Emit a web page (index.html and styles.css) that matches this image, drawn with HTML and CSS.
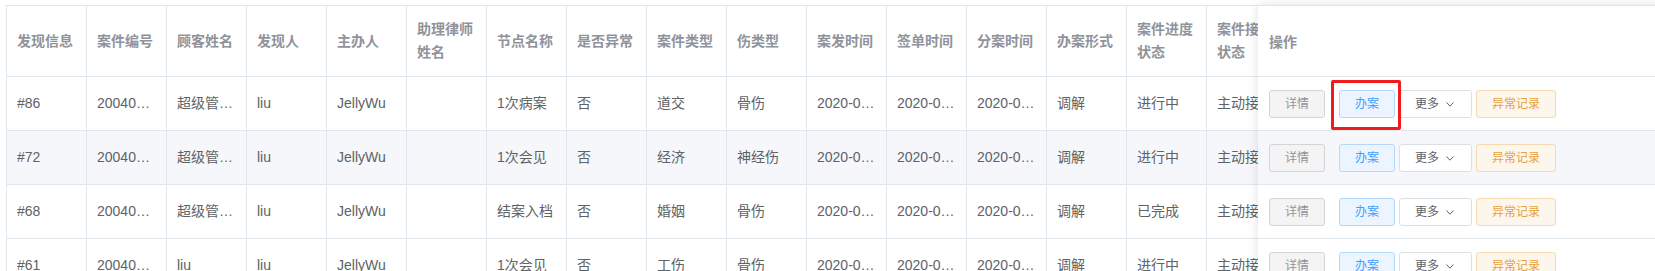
FILE: index.html
```html
<!DOCTYPE html>
<html lang="zh-CN">
<head>
<meta charset="utf-8">
<title>案件列表</title>
<link rel="stylesheet" href="styles.css">
</head>
<body>
<div class="table-wrap">
  <div class="grid">
    <div class="th"><span class="txt">发现信息</span></div>
    <div class="th"><span class="txt">案件编号</span></div>
    <div class="th"><span class="txt">顾客姓名</span></div>
    <div class="th"><span class="txt">发现人</span></div>
    <div class="th"><span class="txt">主办人</span></div>
    <div class="th"><span class="txt">助理律师姓名</span></div>
    <div class="th"><span class="txt">节点名称</span></div>
    <div class="th"><span class="txt">是否异常</span></div>
    <div class="th"><span class="txt">案件类型</span></div>
    <div class="th"><span class="txt">伤类型</span></div>
    <div class="th"><span class="txt">案发时间</span></div>
    <div class="th"><span class="txt">签单时间</span></div>
    <div class="th"><span class="txt">分案时间</span></div>
    <div class="th"><span class="txt">办案形式</span></div>
    <div class="th"><span class="txt">案件进度状态</span></div>
    <div class="th"><span class="txt">案件接收状态</span></div>
    <div class="th"><span class="txt">操作</span></div>

    <div class="row">
      <div class="td"><span class="txt">#86</span></div>
      <div class="td"><span class="txt">2004010086</span></div>
      <div class="td"><span class="txt">超级管理员</span></div>
      <div class="td"><span class="txt">liu</span></div>
      <div class="td"><span class="txt">JellyWu</span></div>
      <div class="td"><span class="txt"></span></div>
      <div class="td"><span class="txt">1次病案</span></div>
      <div class="td"><span class="txt">否</span></div>
      <div class="td"><span class="txt">道交</span></div>
      <div class="td"><span class="txt">骨伤</span></div>
      <div class="td"><span class="txt">2020-04-01</span></div>
      <div class="td"><span class="txt">2020-04-02</span></div>
      <div class="td"><span class="txt">2020-04-03</span></div>
      <div class="td"><span class="txt">调解</span></div>
      <div class="td"><span class="txt">进行中</span></div>
      <div class="td"><span class="txt">主动接单</span></div>
      <div class="td"></div>
    </div>
    <div class="row hover">
      <div class="td"><span class="txt">#72</span></div>
      <div class="td"><span class="txt">2004010072</span></div>
      <div class="td"><span class="txt">超级管理员</span></div>
      <div class="td"><span class="txt">liu</span></div>
      <div class="td"><span class="txt">JellyWu</span></div>
      <div class="td"><span class="txt"></span></div>
      <div class="td"><span class="txt">1次会见</span></div>
      <div class="td"><span class="txt">否</span></div>
      <div class="td"><span class="txt">经济</span></div>
      <div class="td"><span class="txt">神经伤</span></div>
      <div class="td"><span class="txt">2020-04-01</span></div>
      <div class="td"><span class="txt">2020-04-02</span></div>
      <div class="td"><span class="txt">2020-04-03</span></div>
      <div class="td"><span class="txt">调解</span></div>
      <div class="td"><span class="txt">进行中</span></div>
      <div class="td"><span class="txt">主动接单</span></div>
      <div class="td"></div>
    </div>
    <div class="row">
      <div class="td"><span class="txt">#68</span></div>
      <div class="td"><span class="txt">2004010068</span></div>
      <div class="td"><span class="txt">超级管理员</span></div>
      <div class="td"><span class="txt">liu</span></div>
      <div class="td"><span class="txt">JellyWu</span></div>
      <div class="td"><span class="txt"></span></div>
      <div class="td"><span class="txt">结案入档</span></div>
      <div class="td"><span class="txt">否</span></div>
      <div class="td"><span class="txt">婚姻</span></div>
      <div class="td"><span class="txt">骨伤</span></div>
      <div class="td"><span class="txt">2020-04-01</span></div>
      <div class="td"><span class="txt">2020-04-02</span></div>
      <div class="td"><span class="txt">2020-04-03</span></div>
      <div class="td"><span class="txt">调解</span></div>
      <div class="td"><span class="txt">已完成</span></div>
      <div class="td"><span class="txt">主动接单</span></div>
      <div class="td"></div>
    </div>
    <div class="row">
      <div class="td"><span class="txt">#61</span></div>
      <div class="td"><span class="txt">2004010061</span></div>
      <div class="td"><span class="txt">liu</span></div>
      <div class="td"><span class="txt">liu</span></div>
      <div class="td"><span class="txt">JellyWu</span></div>
      <div class="td"><span class="txt"></span></div>
      <div class="td"><span class="txt">1次会见</span></div>
      <div class="td"><span class="txt">否</span></div>
      <div class="td"><span class="txt">工伤</span></div>
      <div class="td"><span class="txt">骨伤</span></div>
      <div class="td"><span class="txt">2020-04-01</span></div>
      <div class="td"><span class="txt">2020-04-02</span></div>
      <div class="td"><span class="txt">2020-04-03</span></div>
      <div class="td"><span class="txt">调解</span></div>
      <div class="td"><span class="txt">进行中</span></div>
      <div class="td"><span class="txt">主动接单</span></div>
      <div class="td"></div>
    </div>
  </div>

  <div class="fixed-right">
    <div class="fth"><span class="txt">操作</span></div>
    <div class="ftd">
      <button class="btn btn-info">详情</button>
      <span class="mark-wrap"><button class="btn btn-primary">办案</button><span class="mark"></span></span>
      <button class="btn btn-default">更多<svg class="chev" width="8" height="5" viewBox="0 0 8 5"><polyline points="0.5,0.5 4,4.2 7.5,0.5" fill="none" stroke="#606266" stroke-width="1"/></svg></button>
      <button class="btn btn-warning">异常记录</button>
    </div>
    <div class="ftd hover">
      <button class="btn btn-info">详情</button>
      <span class="mark-wrap"><button class="btn btn-primary">办案</button></span>
      <button class="btn btn-default">更多<svg class="chev" width="8" height="5" viewBox="0 0 8 5"><polyline points="0.5,0.5 4,4.2 7.5,0.5" fill="none" stroke="#606266" stroke-width="1"/></svg></button>
      <button class="btn btn-warning">异常记录</button>
    </div>
    <div class="ftd">
      <button class="btn btn-info">详情</button>
      <span class="mark-wrap"><button class="btn btn-primary">办案</button></span>
      <button class="btn btn-default">更多<svg class="chev" width="8" height="5" viewBox="0 0 8 5"><polyline points="0.5,0.5 4,4.2 7.5,0.5" fill="none" stroke="#606266" stroke-width="1"/></svg></button>
      <button class="btn btn-warning">异常记录</button>
    </div>
    <div class="ftd">
      <button class="btn btn-info">详情</button>
      <span class="mark-wrap"><button class="btn btn-primary">办案</button></span>
      <button class="btn btn-default">更多<svg class="chev" width="8" height="5" viewBox="0 0 8 5"><polyline points="0.5,0.5 4,4.2 7.5,0.5" fill="none" stroke="#606266" stroke-width="1"/></svg></button>
      <button class="btn btn-warning">异常记录</button>
    </div>
  </div>
</div>
</body>
</html>
```

FILE: styles.css
```css
* { box-sizing: border-box; }
html, body {
  margin: 0;
  padding: 0;
  background: #fff;
  overflow: hidden;
}
body {
  font-family: "Liberation Sans", "Noto Sans CJK SC", sans-serif;
  font-size: 14px;
  color: #606266;
}
.table-wrap {
  position: relative;
  margin: 5px 0 0 6px;
  width: 1800px;
}
.grid {
  display: grid;
  grid-template-columns: repeat(17, 80px);
  grid-template-rows: 71px repeat(4, 54px);
  border-top: 1px solid #dfe6ec;
  border-left: 1px solid #dfe6ec;
  width: max-content;
}
.row { display: contents; }
.th, .td {
  border-right: 1px solid #dfe6ec;
  border-bottom: 1px solid #dfe6ec;
  padding: 0 10px;
  display: flex;
  align-items: center;
  overflow: hidden;
  min-width: 0;
  background: #fff;
}
.th {
  color: #909399;
  font-weight: bold;
  line-height: 23px;
}
.th .txt {
  width: 100%;
  word-break: break-all;
}
.td {
  line-height: 23px;
}
.td .txt {
  display: block;
  width: 100%;
  white-space: nowrap;
  overflow: hidden;
  text-overflow: ellipsis;
}
.row.hover .td { background: #f5f7fa; }

.fixed-right {
  position: absolute;
  top: 0;
  left: 1252px;
  width: 500px;
  background: #fff;
  border-top: 1px solid #dfe6ec;
  box-shadow: 0 0 10px rgba(0, 0, 0, 0.12);
}
.fth, .ftd {
  border-bottom: 1px solid #dfe6ec;
  padding: 0 11px;
  display: flex;
  align-items: center;
  background: #fff;
}
.fth {
  height: 71px;
  color: #909399;
  font-weight: bold;
}
.ftd { height: 54px; }
.ftd.hover { background: #f5f7fa; }

.btn {
  font-family: "Liberation Sans", "Noto Sans CJK SC", sans-serif;
  font-size: 12px;
  line-height: 12px;
  height: 28px;
  padding: 7px 15px;
  border-radius: 3px;
  border: 1px solid #dcdfe6;
  background: #fff;
  color: #606266;
  display: inline-flex;
  align-items: center;
  margin: 0;
  cursor: pointer;
}
.btn-info {
  background: #f4f4f5;
  border-color: #d3d4d6;
  color: #909399;
}
.btn-primary {
  background: #ecf5ff;
  border-color: #b3d8ff;
  color: #409eff;
}
.btn-default {
  margin-left: 4px;
}
.btn-warning {
  margin-left: 4px;
  background: #fdf6ec;
  border-color: #f5dab1;
  color: #e6a23c;
}
.chev {
  margin-left: 7px;
  margin-right: 2px;
  margin-top: 1px;
}
.mark-wrap {
  position: relative;
  display: inline-flex;
  margin-left: 14px;
}
.mark {
  position: absolute;
  top: -10px;
  bottom: -12px;
  left: -8px;
  right: -6px;
  border: 3px solid #f21b1b;
  border-radius: 2px;
  pointer-events: none;
}
```
